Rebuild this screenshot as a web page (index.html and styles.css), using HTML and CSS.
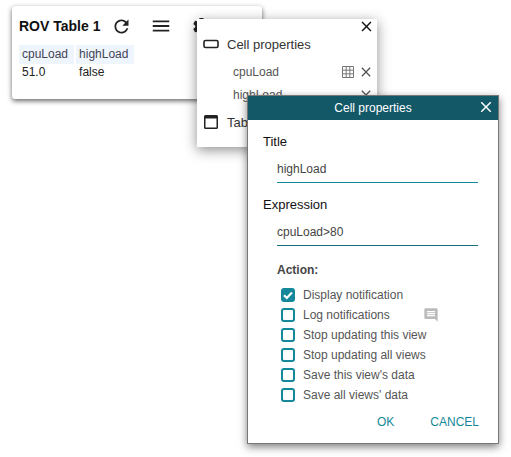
FILE: index.html
```html
<!DOCTYPE html>
<html lang="en">
<head>
    <meta charset="UTF-8">
    <title>ROV Table 1</title>
    <link rel="stylesheet" href="styles.css">
</head>
<body>

<!-- Table view -->
<div class="card">
    <div class="card-head">
        <span class="card-title">ROV Table 1</span>
        <svg class="head-icon refresh" viewBox="0 0 24 24"><path d="M17.65 6.35C16.2 4.9 14.21 4 12 4c-4.42 0-7.99 3.58-7.99 8s3.57 8 7.99 8c3.73 0 6.84-2.55 7.73-6h-2.08c-.82 2.33-3.04 4-5.65 4-3.31 0-6-2.69-6-6s2.69-6 6-6c1.66 0 3.14.69 4.22 1.78L13 11h7V4l-2.35 2.35z"/></svg>
        <svg class="head-icon menu" viewBox="0 0 24 24"><path d="M3 18h18v-2H3v2zm0-5h18v-2H3v2zm0-7v2h18V6H3z"/></svg>
        <svg class="head-icon gear" viewBox="0 0 24 24"><path d="M19.14 12.94c.04-.3.06-.61.06-.94 0-.32-.02-.64-.07-.94l2.03-1.58c.18-.14.23-.41.12-.61l-1.92-3.32c-.12-.22-.37-.29-.59-.22l-2.39.96c-.5-.38-1.03-.7-1.62-.94l-.36-2.54c-.04-.24-.24-.41-.48-.41h-3.84c-.24 0-.43.17-.47.41l-.36 2.54c-.59.24-1.13.57-1.62.94l-2.39-.96c-.22-.08-.47 0-.59.22L2.74 8.87c-.12.21-.08.47.12.61l2.03 1.58c-.05.3-.09.63-.09.94s.02.64.07.94l-2.03 1.58c-.18.14-.23.41-.12.61l1.92 3.32c.12.22.37.29.59.22l2.39-.96c.5.38 1.03.7 1.62.94l.36 2.54c.05.24.24.41.48.41h3.84c.24 0 .44-.17.47-.41l.36-2.54c.59-.24 1.13-.56 1.62-.94l2.39.96c.22.08.47 0 .59-.22l1.92-3.32c.12-.22.07-.47-.12-.61l-2.01-1.58zM12 15.6c-1.98 0-3.6-1.62-3.6-3.6s1.62-3.6 3.6-3.6 3.6 1.62 3.6 3.6-1.62 3.6-3.6 3.6z"/></svg>
    </div>
    <div class="cells">
        <div class="cell-col">
            <span class="cell-name">cpuLoad</span>
            <span class="cell-value">51.0</span>
        </div>
        <div class="cell-col">
            <span class="cell-name">highLoad</span>
            <span class="cell-value">false</span>
        </div>
    </div>
</div>

<!-- Properties menu -->
<div class="menu-panel">
    <div class="menu-close">
        <svg class="close-icon" viewBox="0 0 24 24"><path d="M19 6.41L17.59 5 12 10.59 6.41 5 5 6.41 10.59 12 5 17.59 6.41 19 12 13.41 17.59 19 19 17.59 13.41 12z"/></svg>
    </div>
    <div class="menu-row">
        <svg class="row-icon" viewBox="0 0 16 16"><rect x="1" y="4.5" width="14" height="7" rx="1.5" fill="none" stroke="#222" stroke-width="1.6"/></svg>
        <span>Cell properties</span>
    </div>
    <div class="menu-item first">
        <span class="item-name">cpuLoad</span>
        <svg class="grid-icon" viewBox="0 0 12 12"><path d="M.5.5h11v11H.5zM4.17.5v11M7.83.5v11M.5 4.17h11M.5 7.83h11" fill="none" stroke="#777" stroke-width="1"/></svg>
        <svg class="item-close" viewBox="0 0 24 24"><path d="M19 6.41L17.59 5 12 10.59 6.41 5 5 6.41 10.59 12 5 17.59 6.41 19 12 13.41 17.59 19 19 17.59 13.41 12z"/></svg>
    </div>
    <div class="menu-item">
        <span class="item-name">highLoad</span>
        <svg class="item-close second" viewBox="0 0 24 24"><path d="M19 6.41L17.59 5 12 10.59 6.41 5 5 6.41 10.59 12 5 17.59 6.41 19 12 13.41 17.59 19 19 17.59 13.41 12z"/></svg>
    </div>
    <div class="menu-row table-row">
        <svg class="row-icon" viewBox="0 0 16 16"><path d="M2.5 1h11A1.5 1.5 0 0 1 15 2.500v11a1.500 1.500 0 0 1-1.500 1.500h-11A1.500 1.500 0 0 1 1 13.500v-11A1.500 1.500 0 0 1 2.500 1zm0 3.500v9h11v-9z" fill="#222" fill-rule="evenodd"/></svg>
        <span>Table</span>
    </div>
</div>

<!-- Cell properties dialog -->
<div class="dialog">
    <div class="dialog-head">
        <span>Cell properties</span>
        <svg class="dialog-close" viewBox="0 0 24 24"><path d="M19 6.41L17.59 5 12 10.59 6.41 5 5 6.41 10.59 12 5 17.59 6.41 19 12 13.41 17.59 19 19 17.59 13.41 12z"/></svg>
    </div>
    <div class="dialog-body">
        <div class="field-label">Title</div>
        <div class="field-input">highLoad</div>
        <div class="field-label">Expression</div>
        <div class="field-input dark">cpuLoad&gt;80</div>

        <div class="action-label">Action:</div>
        <div class="check-row"><span class="check checked"><svg viewBox="0 0 14 14"><path d="M3 7.200l2.800 2.800L11 4.500" fill="none" stroke="#fff" stroke-width="2.200"/></svg></span>Display notification</div>
        <div class="check-row"><span class="check"></span>Log notifications
            <svg class="note-icon" viewBox="0 0 24 24"><path d="M21.990 4c0-1.100-.890-2-1.990-2H4c-1.100 0-2 .900-2 2v12c0 1.100.900 2 2 2h14l4 4-.010-18zM18 14H6v-2h12v2zm0-3H6V9h12v2zm0-3H6V6h12v2z"/></svg>
        </div>
        <div class="check-row"><span class="check"></span>Stop updating this view</div>
        <div class="check-row"><span class="check"></span>Stop updating all views</div>
        <div class="check-row"><span class="check"></span>Save this view's data</div>
        <div class="check-row"><span class="check"></span>Save all views' data</div>

        <div class="dialog-actions">
            <span>OK</span>
            <span>CANCEL</span>
        </div>
    </div>
</div>

</body>
</html>
```

FILE: styles.css
```css
body {
    font-family: "Liberation Sans", Arial, sans-serif;
    background-color: #fff;
    color: #333;
    margin: 0;
    width: 511px;
    height: 457px;
    position: relative;
    overflow: hidden;
}
.card {
    position: absolute;
    left: 12px;
    top: 6px;
    width: 250px;
    height: 93px;
    box-sizing: border-box;
    padding: 10px 7px;
    background-color: #fff;
    border-radius: 3px;
    box-shadow: 0 2px 5px rgba(0, 0, 0, 0.6);
}
.card-head {
    display: flex;
    align-items: center;
    height: 20px;
}
.card-title {
    font-size: 14px;
    font-weight: bold;
    color: #111;
    width: 92px;
    white-space: nowrap;
}
.head-icon {
    width: 21px;
    height: 21px;
    fill: #222;
    flex-shrink: 0;
}
.menu {
    margin-left: 18px;
    width: 22px;
    height: 22px;
}
.gear {
    margin-left: 19px;
}
.cells {
    display: flex;
    gap: 2px;
    margin-top: 9px;
    font-size: 12px;
}
.cell-col {
    display: flex;
    flex-direction: column;
}
.cell-name {
    background-color: #eef5fd;
    color: #445;
    padding: 0 6px 0 3px;
    line-height: 19px;
}
.cell-value {
    color: #222;
    padding: 0 3px;
    line-height: 17px;
}
.menu-panel {
    position: absolute;
    left: 197px;
    top: 19px;
    width: 180px;
    height: 128px;
    background-color: #fff;
    box-shadow: 0 3px 12px rgba(0, 0, 0, 0.45);
}
.menu-close {
    display: flex;
    justify-content: flex-end;
    height: 17px;
    padding-right: 2px;
}
.close-icon {
    width: 17px;
    height: 17px;
    margin-top: -1px;
    fill: #111;
}
.menu-row {
    display: flex;
    align-items: center;
    gap: 8px;
    height: 16px;
    padding-left: 6px;
    font-size: 13px;
    color: #333;
}
.row-icon {
    width: 16px;
    height: 16px;
}
.menu-item {
    display: flex;
    align-items: center;
    height: 23px;
    padding-left: 36px;
    font-size: 12px;
    color: #555;
}
.menu-item.first {
    margin-top: 8px;
}
.item-name {
    width: 109px;
}
.grid-icon {
    width: 12px;
    height: 12px;
}
.item-close {
    width: 16px;
    height: 16px;
    margin-left: 4px;
    fill: #555;
}
.item-close.second {
    margin-left: 16px;
}
.table-row {
    margin-top: 8px;
}
.dialog {
    position: absolute;
    left: 247px;
    top: 95px;
    width: 252px;
    height: 349px;
    box-sizing: border-box;
    border: 1px solid #777;
    background-color: #fff;
    box-shadow: 0 3px 8px rgba(0, 0, 0, 0.5);
}
.dialog-head {
    position: relative;
    height: 24px;
    background-color: #135867;
    color: #fff;
    font-size: 12px;
    line-height: 24px;
    text-align: center;
}
.dialog-close {
    position: absolute;
    right: 3px;
    top: 2px;
    width: 18px;
    height: 18px;
    fill: #fff;
}
.dialog-body {
    padding: 14px 20px 0 15px;
}
.field-label {
    font-size: 13px;
    line-height: 16px;
    color: #111;
}
.field-input {
    margin: 10px 0 14px 14px;
    height: 23px;
    line-height: 18px;
    box-sizing: border-box;
    font-size: 12px;
    color: #444;
    border-bottom: 1px solid #14889a;
}
.field-input.dark {
    border-bottom-color: #14707f;
}
.action-label {
    margin: 16px 0 7px 14px;
    font-size: 12px;
    font-weight: bold;
    line-height: 16px;
    color: #444;
}
.check-row {
    display: flex;
    align-items: center;
    height: 20px;
    margin-left: 18px;
    font-size: 12px;
    color: #555;
}
.check {
    width: 14px;
    height: 14px;
    box-sizing: border-box;
    border: 2px solid #14889a;
    border-radius: 3px;
    margin-right: 8px;
    display: inline-block;
}
.check.checked {
    background-color: #14889a;
    border: 0;
}
.check svg {
    display: block;
}
.note-icon {
    width: 16px;
    height: 16px;
    margin-left: 33px;
    fill: #bbb;
}
.dialog-actions {
    display: flex;
    justify-content: flex-end;
    gap: 36px;
    margin: 10px -1px 0 0;
    font-size: 12px;
    color: #14889a;
}
```
